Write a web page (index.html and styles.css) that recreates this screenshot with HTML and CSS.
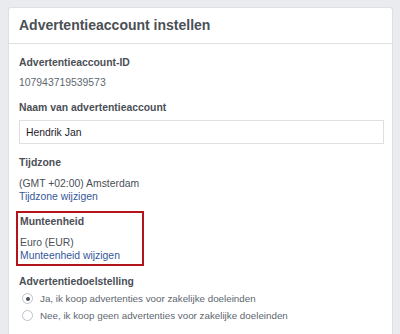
FILE: index.html
```html
<!DOCTYPE html>
<html lang="nl">
  <head>
    <meta charset="UTF-8" />
    <link rel="stylesheet" href="styles.css">
    <title>Advertentieaccount instellen</title>
  </head>
  <body>
    <div class="card">
      <div class="cardHeader">Advertentieaccount instellen</div>
      <div class="cardBody">
        <div class="label">Advertentieaccount-ID</div>
        <div class="value idValue">107943719539573</div>

        <div class="label gapTop">Naam van advertentieaccount</div>
        <input class="textInput" type="text" value="Hendrik Jan" />

        <div class="label gapTop">Tijdzone</div>
        <div class="value smallGap">(GMT +02:00) Amsterdam</div>
        <a class="link" href="#">Tijdzone wijzigen</a>

        <div class="highlight">
          <div class="label">Munteenheid</div>
          <div class="value smallGap">Euro (EUR)</div>
          <a class="link" href="#">Munteenheid wijzigen</a>
        </div>

        <div class="label goalLabel">Advertentiedoelstelling</div>
        <div class="radioRow">
          <span class="radio checked"></span>
          <span>Ja, ik koop advertenties voor zakelijke doeleinden</span>
        </div>
        <div class="radioRow">
          <span class="radio"></span>
          <span>Nee, ik koop geen advertenties voor zakelijke doeleinden</span>
        </div>
      </div>
    </div>
  </body>
</html>
```
FILE: styles.css
```css
body {
  margin: 0;
  background-color: #e9ebee;
  font-family: "Liberation Sans", Arial, sans-serif;
  color: #4b4f56;
}

.card {
  margin: 7px 7px 0 8px;
  height: 340px;
  background-color: #fff;
  border: 1px solid #dddfe2;
  border-bottom: none;
  border-radius: 3px 3px 0 0;
}

.cardHeader {
  height: 35px;
  line-height: 35px;
  padding: 0 10px;
  font-size: 14px;
  font-weight: bold;
  border-bottom: 1px solid #dddfe2;
}

.cardBody {
  padding: 11px 10px 0 10px;
}

.label {
  font-size: 10.4px;
  font-weight: bold;
  line-height: 16px;
}

.value {
  font-size: 10.4px;
  line-height: 13px;
}

.idValue {
  margin-top: 5px;
  color: #606770;
}

.gapTop {
  margin-top: 11px;
}

.smallGap {
  margin-top: 6px;
}

.textInput {
  display: block;
  box-sizing: border-box;
  width: 365px;
  height: 24px;
  margin: 4px 0 0 0;
  padding: 0 6px;
  border: 1px solid #dddfe2;
  font-family: inherit;
  font-size: 10.4px;
  color: #1d2129;
}

.link {
  display: block;
  font-size: 10.4px;
  line-height: 13px;
  color: #365899;
  text-decoration: none;
}

.highlight {
  width: 120px;
  margin: 8px 0 0 -3px;
  padding: 1px 2px 2px 2px;
  border: 2px solid #b3141c;
}

.goalLabel {
  margin-top: 8px;
}

.radioRow {
  display: flex;
  align-items: center;
  height: 17px;
  font-size: 9.8px;
  color: #606770;
}

.radioRow:first-of-type {
  margin-top: 3px;
}

.radio {
  box-sizing: border-box;
  width: 11px;
  height: 11px;
  margin: 0 7px 0 3px;
  border: 1px solid #bec2c9;
  border-radius: 50%;
  display: flex;
  align-items: center;
  justify-content: center;
}

.radio.checked::after {
  content: "";
  width: 4px;
  height: 4px;
  border-radius: 50%;
  background-color: #4b4f56;
}
```
